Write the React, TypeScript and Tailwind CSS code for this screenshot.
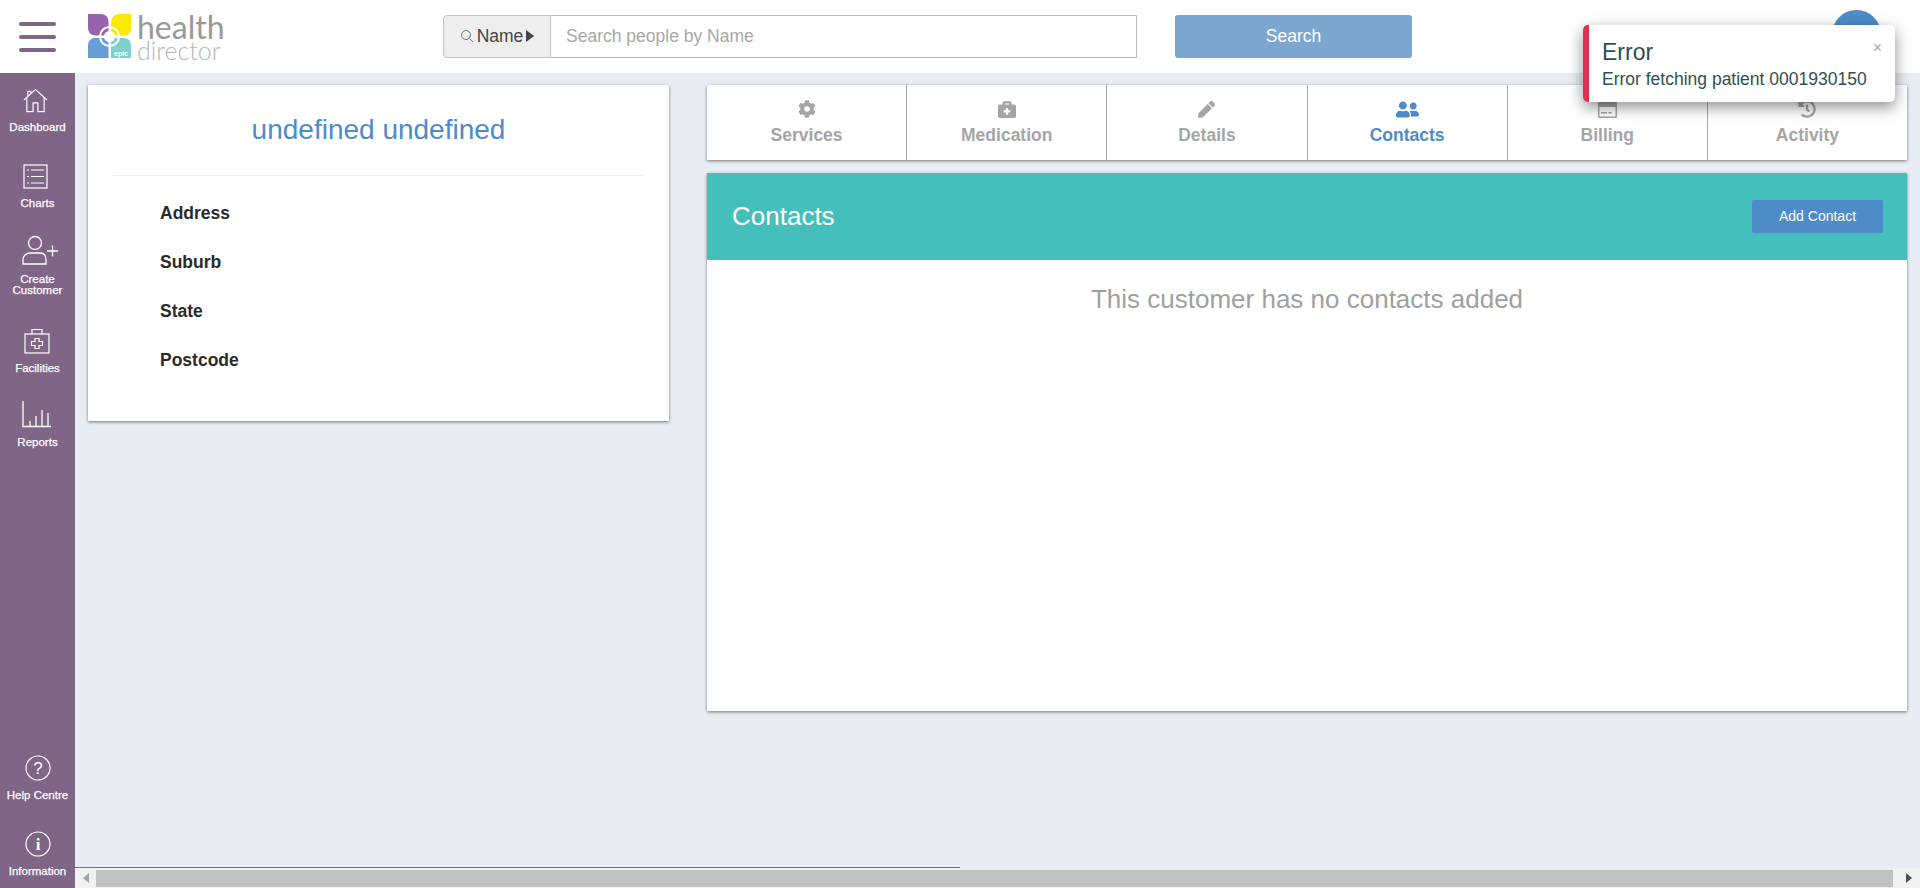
import { FaBriefcaseMedical, FaCog, FaHistory, FaPen, FaUserFriends } from 'react-icons/fa';

const navItems = [
  { label: ['Dashboard'], box: 'h-[76px]', icon: 'home', shift: 'mr-[5px]' },
  { label: ['Charts'], box: 'h-[73px]', icon: 'charts', shift: 'mr-[5px]' },
  { label: ['Create', 'Customer'], box: 'h-[92px]', icon: 'create', shift: 'ml-[5px] mt-[-2px]' },
  { label: ['Facilities'], box: 'h-[74px]', icon: 'facilities', shift: 'mr-[2px] mt-[-1px]' },
  { label: ['Reports'], box: 'h-[74px]', icon: 'reports', shift: 'mr-[2px] mt-[-2px]' },
];

const fields = ['Address', 'Suburb', 'State', 'Postcode'];

function NavIcon({ name }: { name: string }) {
  if (name === 'home') {
    return (
      <svg width="25" height="25" viewBox="0 0 26 26" fill="none" stroke="white" strokeWidth="1.2">
        <path d="M1 12.5 13 1.5l12 11M5 8V3.500h3V5M4 10v14.500h6.500v-9h5v9H22V10" />
      </svg>
    );
  }
  if (name === 'charts') {
    return (
      <svg width="25" height="25" viewBox="0 0 25 25" fill="none" stroke="white" strokeWidth="1.2">
        <rect x="1" y="1" width="23" height="23" />
        <path d="M8 6h13M8 12.500h13M8 19h13M4 6h2M4 12.500h2M4 19h2" />
      </svg>
    );
  }
  if (name === 'create') {
    return (
      <svg width="38" height="30" viewBox="0 0 38 30" fill="none" stroke="white" strokeWidth="1.300">
        <circle cx="14" cy="8" r="6.500" />
        <path d="M2 29v-4c0-4 3-7 7-7h10c4 0 6 3 6 7v4zM26 16h11M31.500 10.500v11" />
      </svg>
    );
  }
  if (name === 'facilities') {
    return (
      <svg width="26" height="26" viewBox="0 0 26 26" fill="none" stroke="white" strokeWidth="1.200">
        <rect x="1" y="6" width="24" height="19" />
        <path d="M8 6V1.500h10V6M11 10.500h4v3h3.500v4H15v3h-4v-3H7.500v-4H11z" />
      </svg>
    );
  }
  return (
    <svg width="30" height="27" viewBox="0 0 30 27" fill="none" stroke="white" strokeWidth="1.300">
      <path d="M1 0v25.500h28M8 25v-5M14 25v-10M20 25V9M26 25v-13" />
    </svg>
  );
}

function Logo() {
  return (
    <div className="flex items-center ml-[32px]">
      <svg width="44" height="45" viewBox="0 0 44 45">
        <path d="M0 0h13c5 0 7.500 4 7.500 8v13.500H8c-5 0-8-3-8-8z" fill="#9763ab" />
        <path d="M43 0v14c0 5-3 7.500-7 7.500H23V9c0-5 3-9 8-9z" fill="#f5ea00" />
        <path d="M0 44V31.500c0-5 3-7.500 8-7.500h12.500v20z" fill="#659fd6" />
        <path d="M23 24h13c4 0 7 3 7 7.500V44H23z" fill="#7fd1c9" />
        <circle cx="21.500" cy="22.500" r="9.500" fill="none" stroke="white" strokeWidth="2" />
        <circle cx="21.500" cy="22.500" r="5.500" fill="white" />
        <text x="33" y="42" textAnchor="middle" fontSize="7" fontWeight="700" fill="white" fontFamily="Liberation Sans">epic</text>
      </svg>
      <div className="ml-[5px] w-[87px] flex flex-col font-['Lato',sans-serif]">
        <span className="text-[32px] leading-[27px] font-normal text-[#999]">health</span>
        <span className="text-[25px] leading-[21px] font-light text-[#b5b5b5]">director</span>
      </div>
    </div>
  );
}

function BillingIcon() {
  return (
    <svg width="19" height="18" viewBox="0 0 19 18" fill="#a5a5a5">
      <path fillRule="evenodd" d="M1 0h17a1 1 0 0 1 1 1v16a1 1 0 0 1-1 1H1a1 1 0 0 1-1-1V1a1 1 0 0 1 1-1zm.500 7v9.500h16V7zM3 12h6v1.500H3zm7.500 0h3v1.500h-3z" />
    </svg>
  );
}

function Tab({ label, active, children }: { label: string; active?: boolean; children: React.ReactNode }) {
  return (
    <div className={`flex-1 h-full flex flex-col items-center pt-[14px] border-r border-[#a8a8a8] last:border-r-0 ${active ? 'text-[#4d8cc9]' : 'text-[#a5a5a5]'}`}>
      <div className="h-[20px] flex items-center justify-center">{children}</div>
      <span className="text-[17.500px] font-bold leading-[24px] mt-[4px]">{label}</span>
    </div>
  );
}

export default function App() {
  return (
    <div className="relative h-[888px] w-[1920px] overflow-hidden flex flex-col bg-[#e8ecf4] font-['Liberation_Sans',Arial,sans-serif]">
      {/* top bar */}
      <header className="h-[73px] shrink-0 bg-white flex items-center">
        <div className="ml-[19px] w-[37px] flex flex-col gap-[9px]">
          <div className="h-[4px] rounded-full bg-[#7f6586]" />
          <div className="h-[4px] rounded-full bg-[#7f6586]" />
          <div className="h-[4px] rounded-full bg-[#7f6586]" />
        </div>
        <Logo />
        <div className="ml-[219px] flex h-[43px] w-[694px] mt-[-1px]">
          <div className="w-[108px] flex items-center justify-center gap-[3px] bg-[#eeeeee] border border-[#c4c4c4] rounded-l text-[17.500px] text-[#444]">
            <svg width="14" height="14" viewBox="0 0 14 14" fill="none" stroke="#777" strokeWidth="1">
              <circle cx="6" cy="6" r="4.500" />
              <path d="m9.500 9.500 3.500 3.500" />
            </svg>
            <span>Name</span>
            <svg width="8" height="12" viewBox="0 0 8 12" fill="#444"><path d="M0 0l8 6-8 6z" /></svg>
          </div>
          <div className="flex-1 flex items-center pl-[15px] bg-white border border-l-0 border-[#b8b8b8] text-[17.500px] text-[#a8a8a8]">
            Search people by Name
          </div>
        </div>
        <button className="ml-[38px] mt-[-1px] w-[237px] h-[43px] rounded-[3px] bg-[#7ba7cf] text-white text-[17.500px]">Search</button>
        <div className="ml-auto mr-[39px] mt-[-4px] w-[49px] h-[49px] rounded-full bg-[#4d8cc9]" />
      </header>

      <div className="flex-1 flex min-h-0">
        {/* side nav */}
        <aside className="w-[75px] shrink-0 bg-[#7f6586] text-white flex flex-col justify-between text-[11.500px] leading-[11px] [-webkit-text-stroke:0.25px_white]">
          <nav className="pt-[15px]">
            {navItems.map((item) => (
              <div key={item.label[0]} className={`${item.box} flex flex-col items-center`}>
                <div className={item.shift}>
                  <NavIcon name={item.icon} />
                </div>
                <div className="mt-[9px] text-center">
                  {item.label.map((l) => (
                    <div key={l}>{l}</div>
                  ))}
                </div>
              </div>
            ))}
          </nav>
          <div className="pb-[11px] flex flex-col items-center">
            <svg width="26" height="26" viewBox="0 0 26 26" fill="none" stroke="white" strokeWidth="1.200">
              <circle cx="13" cy="13" r="12" />
              <text x="13" y="19" textAnchor="middle" fontSize="17" fill="white" stroke="none" fontFamily="Liberation Sans">?</text>
            </svg>
            <div className="mt-[9px]">Help Centre</div>
            <svg className="mt-[30px]" width="26" height="26" viewBox="0 0 26 26" fill="none" stroke="white" strokeWidth="1.200">
              <circle cx="13" cy="13" r="12" />
              <text x="13" y="19" textAnchor="middle" fontSize="17" fontWeight="700" fill="white" stroke="none" fontFamily="Liberation Serif">i</text>
            </svg>
            <div className="mt-[9px]">Information</div>
          </div>
        </aside>

        <div className="flex-1 min-w-0 flex flex-col">
          <main className="flex-1 flex items-start pt-[12px] pl-[13px]">
            <section className="w-[581px] h-[336px] bg-white shadow-[0_1px_3px_rgba(0,0,0,0.5)] px-[25px]">
              <h1 className="h-[91px] flex items-center justify-center text-[28px] text-[#4d8cc9] border-b border-[#eeeeee]">undefined undefined</h1>
              <div className="pt-[13px] pl-[47px]">
                {fields.map((f) => (
                  <div key={f} className="h-[49px] flex items-center text-[17.500px] font-bold text-[#2b2b2b]">{f}</div>
                ))}
              </div>
            </section>
            <div className="ml-[38px] w-[1200px]">
              <div className="h-[75px] flex bg-white shadow-[0_1px_3px_rgba(0,0,0,0.5)]">
                <Tab label="Services"><FaCog size={18} /></Tab>
                <Tab label="Medication"><FaBriefcaseMedical size={18} /></Tab>
                <Tab label="Details"><FaPen size={17} /></Tab>
                <Tab label="Contacts" active><FaUserFriends size={23} /></Tab>
                <Tab label="Billing"><BillingIcon /></Tab>
                <Tab label="Activity"><FaHistory size={18} /></Tab>
              </div>
              <section className="mt-[13px] h-[538px] bg-white shadow-[0_1px_3px_rgba(0,0,0,0.5)]">
                <div className="h-[87px] bg-[#45bfbc] flex items-center justify-between pl-[25px] pr-[24px]">
                  <h2 className="text-[26px] text-white">Contacts</h2>
                  <button className="w-[131px] h-[33px] mt-[-1px] rounded-[2px] bg-[#4d8cc9] text-white text-[14px]">Add Contact</button>
                </div>
                <p className="pt-[20px] text-center text-[26px] text-[#a0a0a0]">This customer has no contacts added</p>
              </section>
            </div>
          </main>

          {/* scroller */}
          <div className="shrink-0">
            <div className="h-[1px] w-[885px] bg-[#7f6586]" />
            <div className="h-[20px] bg-[#f1f1f1] flex items-center">
              <div className="w-[21px] flex justify-center">
                <svg width="6" height="10" viewBox="0 0 6 10" fill="#a3a3a3"><path d="M6 0v10L0 5z" /></svg>
              </div>
              <div className="flex-1 h-[17px] mt-[1px] bg-[#c1c1c1]" />
              <div className="w-[27px] flex justify-center pl-[5px]">
                <svg width="6" height="10" viewBox="0 0 6 10" fill="#505050"><path d="M0 0v10l6-5z" /></svg>
              </div>
            </div>
          </div>
        </div>
      </div>

      {/* error toast */}
      <div className="absolute left-[1583px] top-[25px] w-[312px] h-[77px] rounded-[5px] bg-white border-l-[6px] border-[#e32f4f] shadow-[0_5px_15px_rgba(0,0,0,0.45)] text-[#2f4f4f] pl-[13px]">
        <div className="text-[23px] leading-[26px] mt-[14px]">Error</div>
        <div className="text-[17.500px] leading-[20px] mt-[4px] whitespace-nowrap">Error fetching patient 0001930150</div>
        <span className="absolute right-[13px] top-[13px] text-[16px] leading-[20px] text-[#aaa]">×</span>
      </div>
    </div>
  );
}
